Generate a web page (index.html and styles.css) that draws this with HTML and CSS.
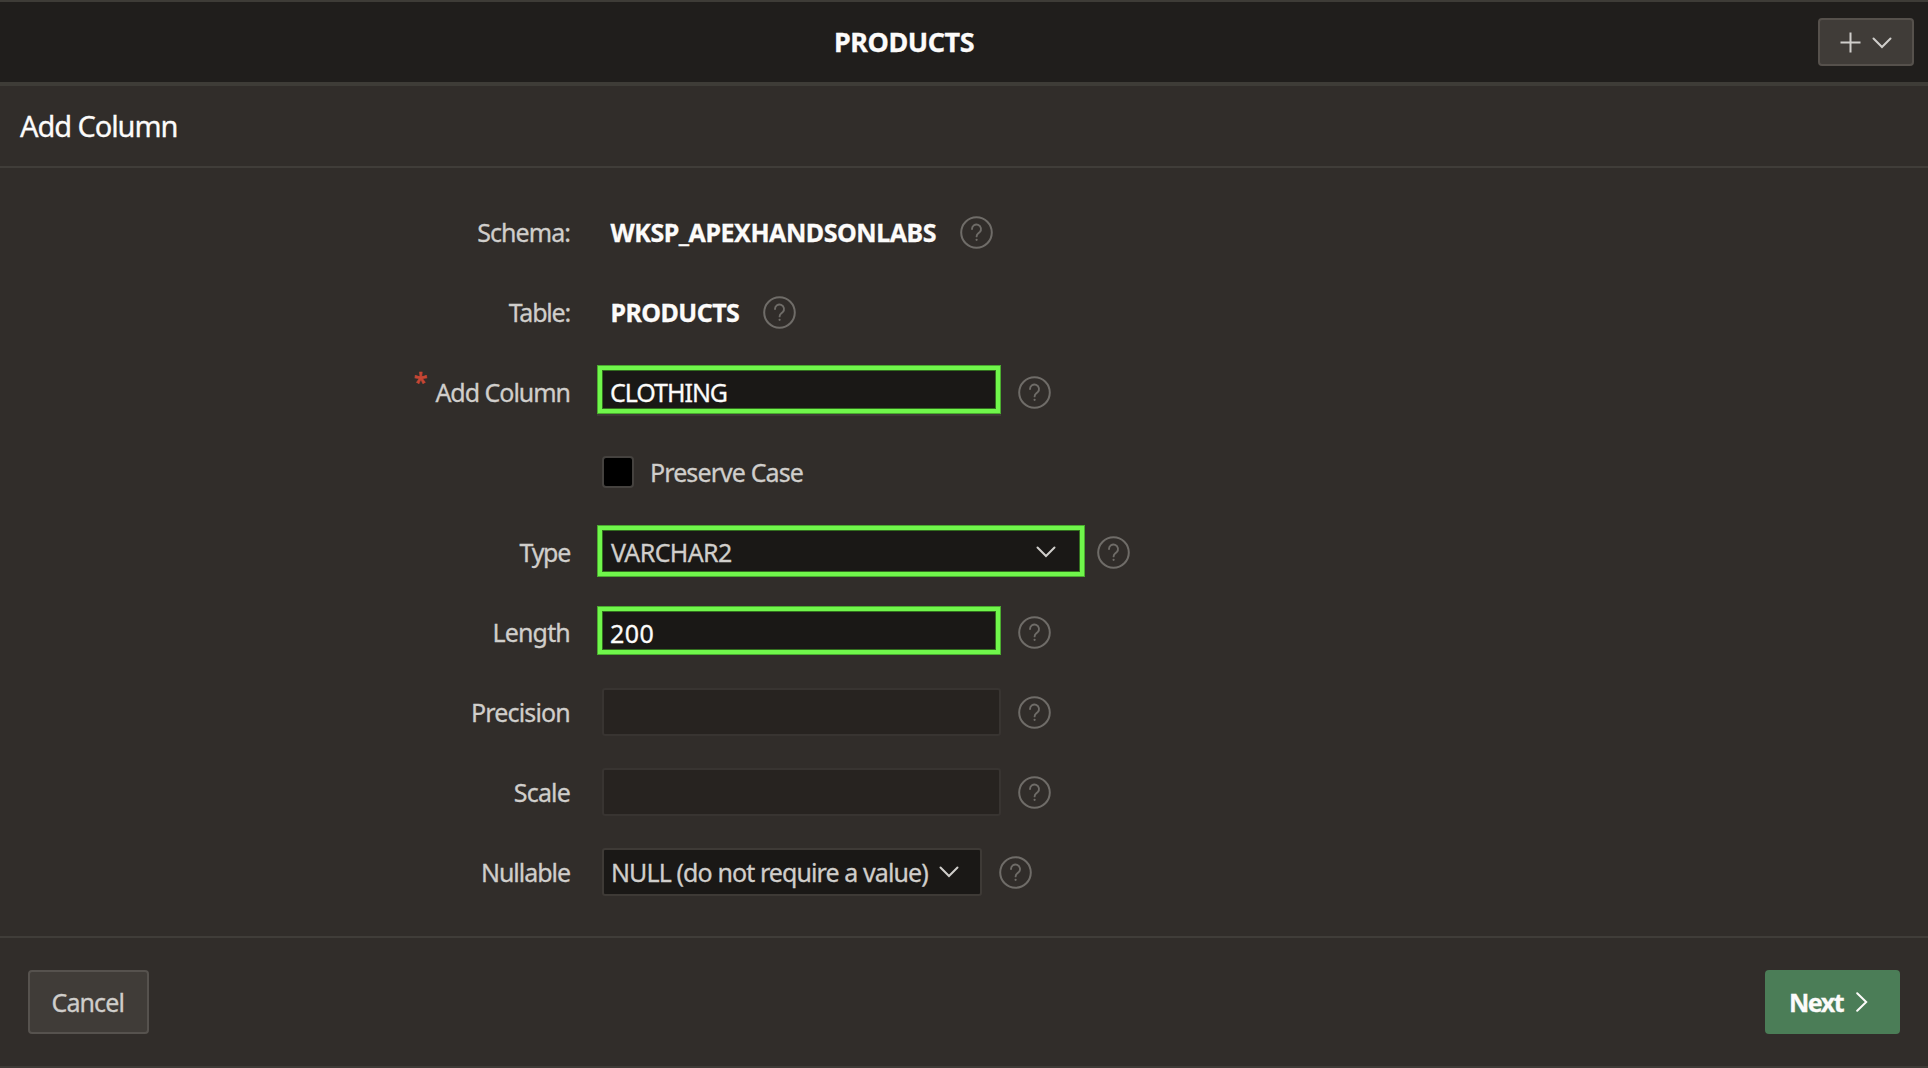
FILE: index.html
```html
<!DOCTYPE html>
<html lang="en">
<head>
<meta charset="utf-8">
<title>Add Column</title>
<link rel="stylesheet" href="styles.css">
</head>
<body>
<svg width="0" height="0" class="defs" aria-hidden="true">
  <symbol id="help" viewBox="0 0 33 33">
    <circle cx="16.5" cy="16.5" r="15.3" fill="none" stroke="#6f6c68" stroke-width="2"/>
    <path d="M12 13.1a4.5 4.5 0 1 1 7.7 3.1c-1.3 1.3-3.1 1.9-3.1 4.2" fill="none" stroke="#6f6c68" stroke-width="1.9" stroke-linecap="round"/>
    <circle cx="16.6" cy="23.8" r="1.1" fill="#6f6c68"/>
  </symbol>
  <symbol id="chevron" viewBox="0 0 20 12">
    <path d="M1.5 1.5 10 10 18.5 1.5" fill="none" stroke="currentColor" stroke-width="2" stroke-linecap="round"/>
  </symbol>
</svg>
<div class="page">
  <header class="topbar">
    <h1 class="title">PRODUCTS</h1>
    <button class="add" aria-label="Add">
      <svg class="plus" viewBox="0 0 21 21"><path d="M10.5 .5v20M.5 10.5h20" stroke="currentColor" stroke-width="2"/></svg>
      <svg class="chevron"><use href="#chevron"/></svg>
    </button>
  </header>
  <div class="heading"><h2 class="subtitle">Add Column</h2></div>
  <main class="form">
    <div class="row"><label class="label t-schema">Schema:</label><strong class="value t-name">WKSP_APEXHANDSONLABS</strong><svg class="help"><use href="#help"/></svg></div>
    <div class="row"><label class="label t-table">Table:</label><strong class="value t-product">PRODUCTS</strong><svg class="help"><use href="#help"/></svg></div>
    <div class="row"><label class="label t-wide"><span class="required">*</span>Add Column</label><div class="field marked edge t-wide bright">CLOTHING</div><svg class="help"><use href="#help"/></svg></div>
    <div class="row"><span class="label"></span><span class="checkbox"></span><span class="check-label">Preserve Case</span></div>
    <div class="row"><label class="label t-type">Type</label><div class="field marked type t-varchar">VARCHAR2<svg class="chevron"><use href="#chevron"/></svg></div><svg class="help near"><use href="#help"/></svg></div>
    <div class="row"><label class="label t-medium">Length</label><div class="field marked low bright t-number">200</div><svg class="help"><use href="#help"/></svg></div>
    <div class="row"><label class="label t-medium">Precision</label><div class="field disabled"></div><svg class="help"><use href="#help"/></svg></div>
    <div class="row"><label class="label t-medium">Scale</label><div class="field disabled"></div><svg class="help"><use href="#help"/></svg></div>
    <div class="row"><label class="label t-wide">Nullable</label><div class="field nullable">NULL (do not require a value)<svg class="chevron"><use href="#chevron"/></svg></div><svg class="help"><use href="#help"/></svg></div>
  </main>
  <footer class="footer">
    <button class="button cancel">Cancel</button>
    <button class="button next">Next<svg class="arrow" viewBox="0 0 12 20"><path d="M1.2 1.2 10.2 10 1.2 18.8" fill="none" stroke="currentColor" stroke-width="2" stroke-linecap="round"/></svg></button>
  </footer>
</div>
</body>
</html>
```
FILE: styles.css
```css
* { box-sizing: border-box; }
body {
  margin: 0;
  background: #312d2a;
  color: #d0cecb;
  font: 25px "Noto Sans", "Open Sans", sans-serif;
  letter-spacing: -0.9px;
  -webkit-text-stroke: 0.3px currentColor;
}
h1, h2 { margin: 0; }
svg { display: block; flex: none; }
button { font: inherit; letter-spacing: inherit; color: inherit; padding: 0; }
.defs { position: absolute; }
.page {
  width: 1928px;
  height: 1068px;
  display: flex;
  flex-direction: column;
  border-bottom: 2px solid #3e3b37;
}
.topbar {
  height: 86px;
  display: grid;
  grid-template-columns: 1808px 1fr;
  align-items: center;
  background: #201e1c;
  border-top: 2px solid #3e3c37;
  border-bottom: 4px solid #3e3c37;
}
.title {
  font-size: 27px;
  line-height: 80px;
  letter-spacing: -0.46px;
  color: #fcfbfa;
  text-align: center;
}
.add {
  width: 96px;
  height: 48px;
  margin-left: 10px;
  padding-left: 20px;
  display: flex;
  align-items: center;
  gap: 11px;
  background: #403c38;
  border: 2px solid #56514c;
  border-radius: 4px;
}
.plus { width: 21px; height: 21px; }
.chevron { width: 20px; height: 12px; }
.add .chevron { margin-top: 2px; }
.heading {
  height: 82px;
  padding-left: 20px;
  border-bottom: 2px solid #403d39;
}
.subtitle {
  font-size: 29px;
  font-weight: 400;
  line-height: 80px;
  letter-spacing: -1.07px;
  color: #fcfbfa;
}
.form { height: 770px; padding-top: 24px; border-bottom: 2px solid #403d39; }
.row { height: 80px; display: flex; align-items: center; line-height: 80px; }
.label {
  width: 570px;
  margin-right: 32px;
  display: flex;
  justify-content: flex-end;
}
.required {
  margin-right: 9px;
  color: #c74634;
  line-height: 58px;
  -webkit-text-stroke-width: 0.7px;
}
.value { margin-left: 8.5px; color: #fcfbfa; }
.value + .help { margin-left: 24px; }
.field {
  width: 399px;
  height: 48px;
  padding-left: 7px;
  display: flex;
  align-items: center;
  background: #1a1816;
  border: 2px solid #3e3a36;
  border-radius: 3px;
}
.field.disabled { background: #272320; border-color: #383431; }
.field.marked {
  width: 404px;
  height: 49px;
  margin: -5px -1px 0 -5px;
  padding-left: 8px;
  border: 5px solid #70f64b;
  outline: 1px solid #4aab2f;
  outline-offset: -1px;
  border-radius: 0;
  box-shadow: inset 0 0 0 1px #33701f;
}
.field.marked.edge { box-shadow: inset 0 0 0 1px #33701f, 0 2px 0 #3e3a36; }
.field.marked.low { margin-top: -4px; }
.field.type { width: 488px; height: 52px; margin-top: -2px; padding-left: 9px; padding-top: 2px; }
.field.marked.bright { padding-top: 5px; }
.bright { color: #fcfbfa; }
.type .chevron { margin-left: auto; margin-right: 24px; }
.field.nullable { width: 380px; }
.nullable .chevron { margin-left: 11px; }
.checkbox {
  width: 32px;
  height: 32px;
  background: #000;
  border: 2px solid #45423f;
  border-radius: 4px;
}
.check-label { margin-left: 16px; }
.help { width: 33px; height: 33px; margin-left: 16.5px; }
.marked + .help { margin-left: 17.5px; }
.marked + .help.near { margin-left: 12.5px; }
.footer {
  flex: 1;
  padding: 0 28px;
  display: flex;
  justify-content: space-between;
  align-items: center;
}
.button {
  height: 64px;
  display: flex;
  align-items: center;
  border-radius: 4px;
}
.cancel {
  width: 121px;
  padding-left: 21.5px;
  background: #403c38;
  border: 2px solid #56524e;
}
.next {
  width: 135px;
  padding-left: 24px;
  background: #4b7d57;
  border: 0;
  color: #fcfbfa;
  font-weight: 700;
  letter-spacing: -1.5px;
}
.arrow { width: 12px; height: 20px; margin-left: 13px; }
.t-schema { letter-spacing: -0.95px; }
.t-table { letter-spacing: -1.2px; }
.t-name { letter-spacing: -0.45px; }
.t-product { letter-spacing: -0.55px; }
.t-wide { letter-spacing: -1.03px; }
.t-medium { letter-spacing: -0.82px; }
.t-type { letter-spacing: -1.3px; }
.t-varchar { letter-spacing: -0.63px; }
.t-number { letter-spacing: 0.4px; }
```
